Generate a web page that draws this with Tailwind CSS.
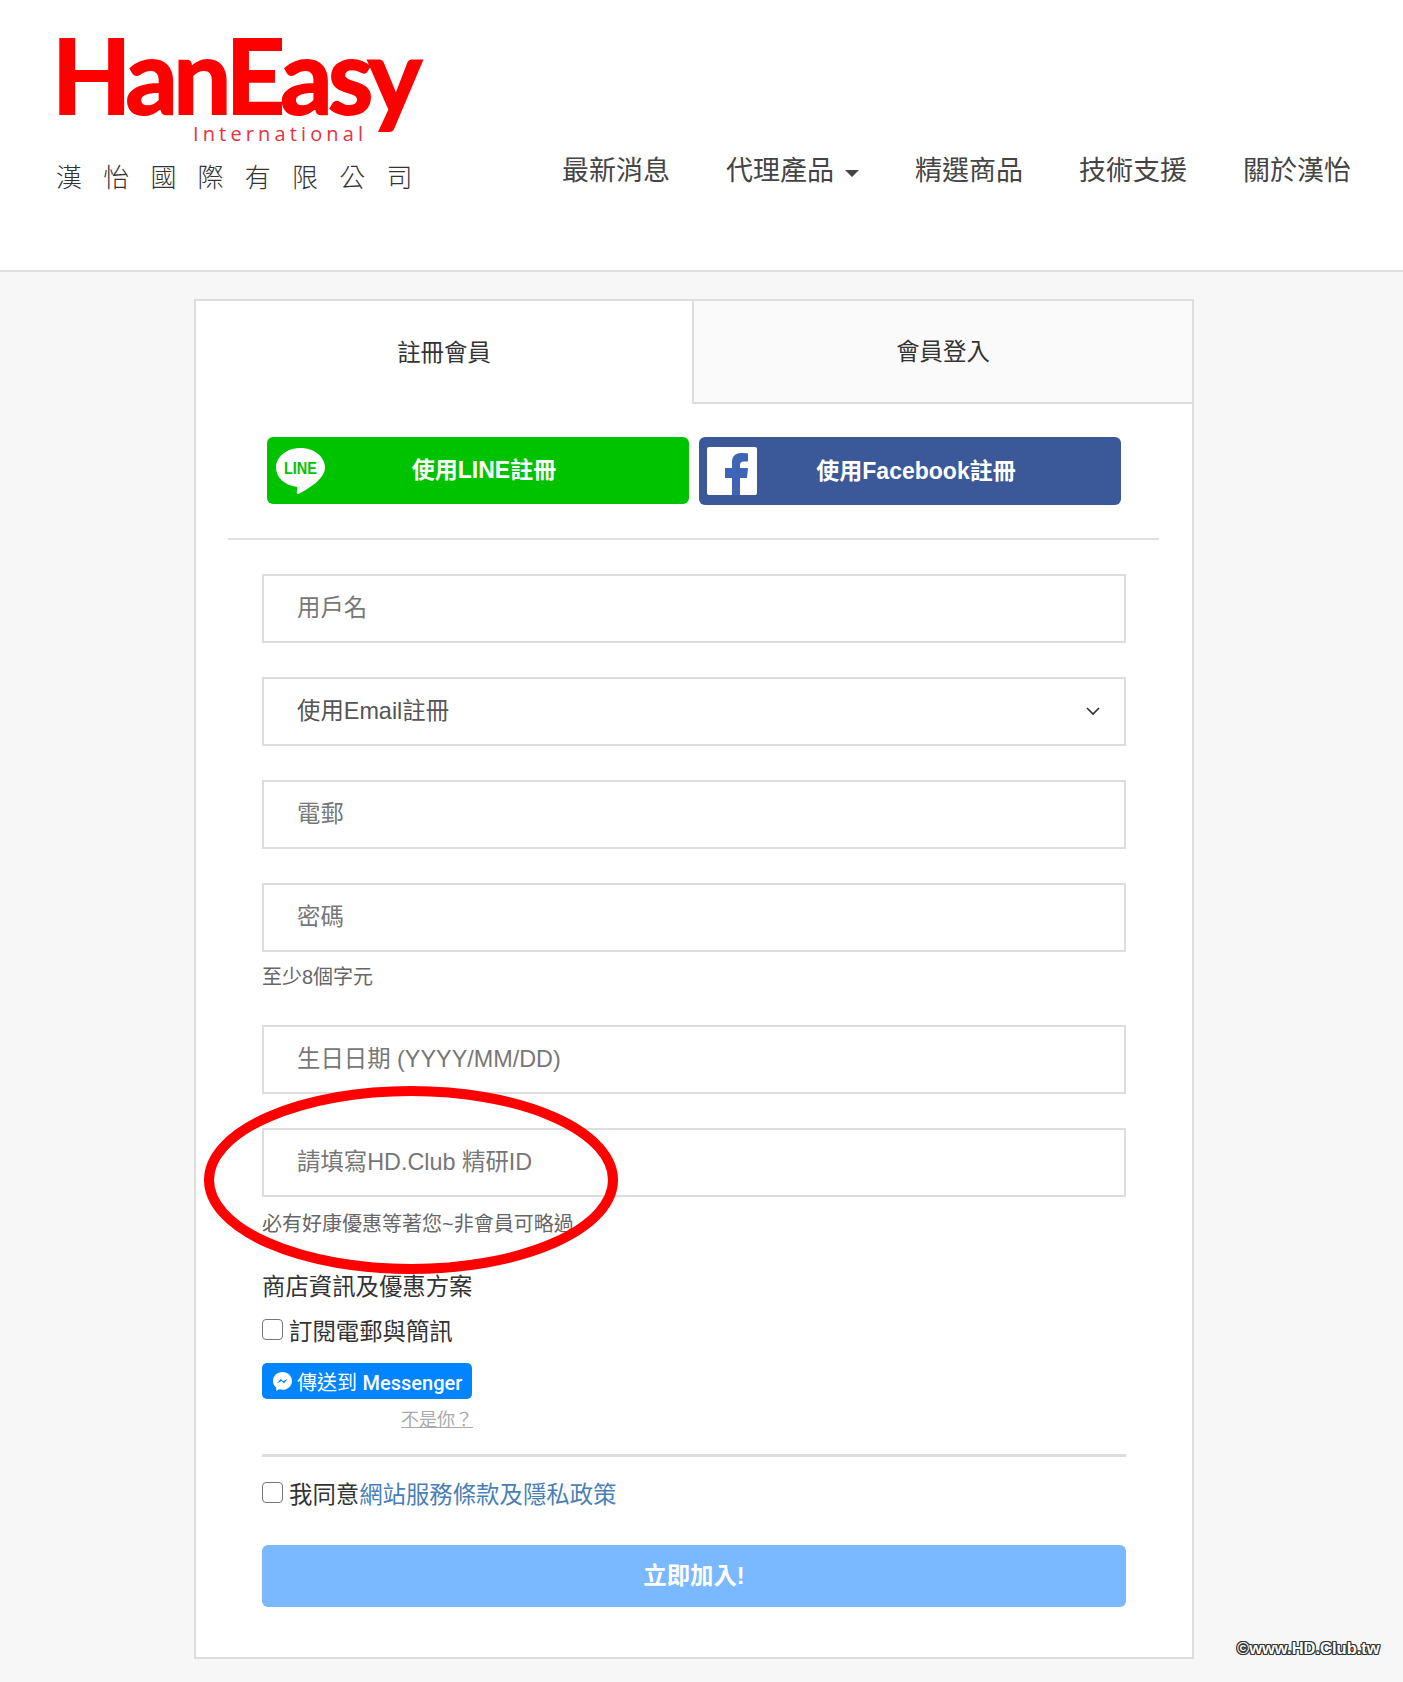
<!DOCTYPE html>
<html lang="zh-Hant">

<head>
    <meta charset="UTF-8">
    <meta name="viewport" content="width=device-width, initial-scale=1.0">
    <title>HanEasy 註冊會員</title>
    <script src="https://cdn.jsdelivr.net/npm/@tailwindcss/browser@4"></script>
</head>

<body class="relative h-[1682px] bg-[#f7f7f7] text-[#333] overflow-hidden [font-family:'Liberation_Sans','Noto_Sans_CJK_TC',sans-serif]">
    <!-- header -->
    <header class="flex justify-between items-start h-[272px] bg-white border-b-2 border-[#e0e0e0]">
        <div class="pl-[56px] pt-[30px]">
            <svg class="block overflow-visible" width="372" height="120" viewBox="0 0 372 120">
                <text x="-4" y="84" textLength="370" font-family="Lato" font-weight="700" font-size="103" fill="#ff0000" stroke="#ff0000" stroke-width="2">HanEasy</text>
                <text x="137" y="111" textLength="170" font-family="Open Sans" font-size="20" fill="#e8323c">International</text>
            </svg>
            <p class="mt-[10px] text-[26px] leading-[36px] tracking-[21.2px] font-light text-[#333] whitespace-nowrap">漢怡國際有限公司</p>
        </div>
        <nav class="flex items-center gap-[56px] pt-[151px] pr-[52px] text-[27px] leading-[40px] text-[#444]">
            <a href="#">最新消息</a>
            <a href="#" class="flex items-center gap-[11px]">代理產品 <span class="mt-[4px] border-x-[7px] border-x-transparent border-t-[7px] border-t-[#444]"></span></a>
            <a href="#">精選商品</a>
            <a href="#">技術支援</a>
            <a href="#">關於漢怡</a>
        </nav>
    </header>

    <!-- card -->
    <main class="pt-[27px]">
        <div class="ml-[194px] w-[1000px] h-[1360px] bg-white border-2 border-[#ddd]">
            <div class="grid grid-cols-[496px_1fr] h-[103px] text-[23.400px]">
                <div class="flex items-center justify-center pt-[2px]">註冊會員</div>
                <div class="flex items-center justify-center pt-[2px] bg-[#fafafa] border-l-2 border-b-2 border-[#ddd]">會員登入</div>
            </div>

            <div class="flex gap-[10px] ml-[71px] mt-[33px]">
                <a href="#" class="relative flex items-center justify-center w-[422px] h-[67px] pl-[12px] rounded-[6px] bg-[#00c300] text-white text-[23px] font-bold">
                    <svg class="absolute left-[9px] top-[11px]" width="49" height="47" viewBox="0 0 49 47">
                        <path d="M24.5 0C11 0 0 8.700 0 19.500 0 29.200 8.500 37.200 20 38.700c1.500.3 1.500 1 1.300 2.200l-.5 3.400c-.2 1.200.6 2.300 2.300 1.300C32 41 49 31 49 19.500 49 8.700 38 0 24.500 0z" fill="#fff" />
                        <text x="24.500" y="26" text-anchor="middle" textLength="33" lengthAdjust="spacingAndGlyphs" font-family="Liberation Sans" font-weight="700" font-size="16" fill="#00c300">LINE</text>
                    </svg>
                    使用LINE註冊
                </a>
                <a href="#" class="relative flex items-center justify-center w-[422px] h-[68px] pl-[12px] rounded-[6px] bg-[#3b5998] text-white text-[23px] font-bold">
                    <span class="absolute left-[8px] top-[10px] w-[50px] h-[48px] rounded-[2px] bg-white overflow-hidden">
                        <svg width="50" height="48" viewBox="0 0 50 48">
                            <path d="M25 48V31h-7V21h7v-6c0-6 4-9 9-9 3 0 6 .3 7 .4v8h-4c-3 0-4 1.500-4 3.500V21h8l-1 10h-7v17z" fill="#3e65b5" />
                        </svg>
                    </span>
                    使用Facebook註冊
                </a>
            </div>

            <div class="h-[2px] mt-[33px] ml-[32px] w-[931px] bg-[#e0e0e0]"></div>

            <form class="ml-[66px] w-[864px] mt-[34px] text-[23.400px]">
                <input type="text" placeholder="用戶名" class="block w-full h-[69px] px-[33px] border-2 border-[#ddd] placeholder:text-[#777] text-[23.400px]">
                <div class="relative mt-[34px]">
                    <select class="block w-full h-[69px] px-[33px] border-2 border-[#ddd] appearance-none bg-white text-[#555] text-[23.400px]">
                        <option>使用Email註冊</option>
                    </select>
                    <svg class="absolute right-[26px] top-[29px]" width="14" height="10" viewBox="0 0 14 10">
                        <path d="M1 2l6 6 6-6" fill="none" stroke="#333" stroke-width="1.700" />
                    </svg>
                </div>
                <input type="email" placeholder="電郵" class="block w-full h-[69px] mt-[34px] px-[33px] border-2 border-[#ddd] placeholder:text-[#777] text-[23.400px]">
                <input type="text" placeholder="密碼" class="block w-full h-[69px] mt-[34px] px-[33px] border-2 border-[#ddd] placeholder:text-[#777] text-[23.400px]">
                <p class="mt-[11px] text-[20px] leading-[28px] text-[#666]">至少8個字元</p>
                <input type="text" placeholder="生日日期 (YYYY/MM/DD)" class="block w-full h-[69px] mt-[34px] px-[33px] border-2 border-[#ddd] placeholder:text-[#777] text-[23.400px]">
                <input type="text" placeholder="請填寫HD.Club 精研ID" class="block w-full h-[69px] mt-[34px] px-[33px] border-2 border-[#ddd] placeholder:text-[#777] text-[23.400px]">
                <p class="mt-[13px] text-[20px] leading-[28px] text-[#666]">必有好康優惠等著您~非會員可略過</p>

                <p class="mt-[31px] leading-[36px]">商店資訊及優惠方案</p>
                <label class="flex items-center gap-[6px] mt-[10px] h-[36px]">
                    <input type="checkbox" class="appearance-none w-[21px] h-[21px] -mt-[8px] rounded-[4px] border border-[#767676] bg-white">
                    訂閱電郵與簡訊
                </label>
                <a href="#" class="flex items-center w-[210px] h-[36px] mt-[12px] pl-[11px] rounded-[5px] bg-[#0084ff] text-white text-[20px]">
                    <svg width="19" height="19" viewBox="0 0 19 19">
                        <path d="M9.500 0C4.200 0 0 3.900 0 8.900c0 2.700 1.200 5 3.200 6.600V19l3-1.700c1 .3 2.100.5 3.300.5 5.300 0 9.500-4 9.500-8.900S14.800 0 9.500 0z" fill="#fff" />
                        <path d="M3.900 11.500l3.800-4.600 2.500 2.300 4.600-2.500-3.800 4.500-2.500-2.300z" fill="#0084ff" />
                    </svg>
                    <span class="ml-[5px] pt-[3px]">傳送到 <span class="[font-family:Roboto,sans-serif] font-medium">Messenger</span></span>
                </a>
                <a href="#" class="block w-[71px] ml-[139px] mt-[10px] text-[18px] leading-[22px] text-[#aaa] underline whitespace-nowrap">不是你？</a>

                <div class="h-[3px] mt-[23px] bg-[#ddd]"></div>

                <label class="flex items-center gap-[6px] mt-[21px] h-[36px]">
                    <input type="checkbox" class="appearance-none w-[21px] h-[21px] -mt-[8px] rounded-[4px] border border-[#767676] bg-white">
                    <span>我同意<a href="#" class="text-[#4a7fb5]">網站服務條款及隱私政策</a></span>
                </label>

                <button type="button" class="block w-full h-[62px] pt-[2px] mt-[31px] rounded-[6px] bg-[#7ab8ff] text-white text-[23.400px] font-bold">立即加入!</button>
            </form>
        </div>
    </main>

    <!-- red annotation circle -->
    <svg class="absolute left-[200px] top-[1080px] pointer-events-none" width="424" height="200" viewBox="0 0 424 200">
        <ellipse cx="211" cy="100" rx="202" ry="89" fill="none" stroke="#f00" stroke-width="10" />
    </svg>

    <!-- watermark -->
    <span class="absolute left-[1237px] top-[1637px] text-[16.500px] leading-[22px] font-bold text-white [text-shadow:1px_0_0_#333,-1px_0_0_#333,0_1px_0_#333,0_-1px_0_#333,1px_1px_0_#333,-1px_-1px_0_#333,1px_-1px_0_#333,-1px_1px_0_#333]">©www.HD.Club.tw</span>
</body>

</html>
